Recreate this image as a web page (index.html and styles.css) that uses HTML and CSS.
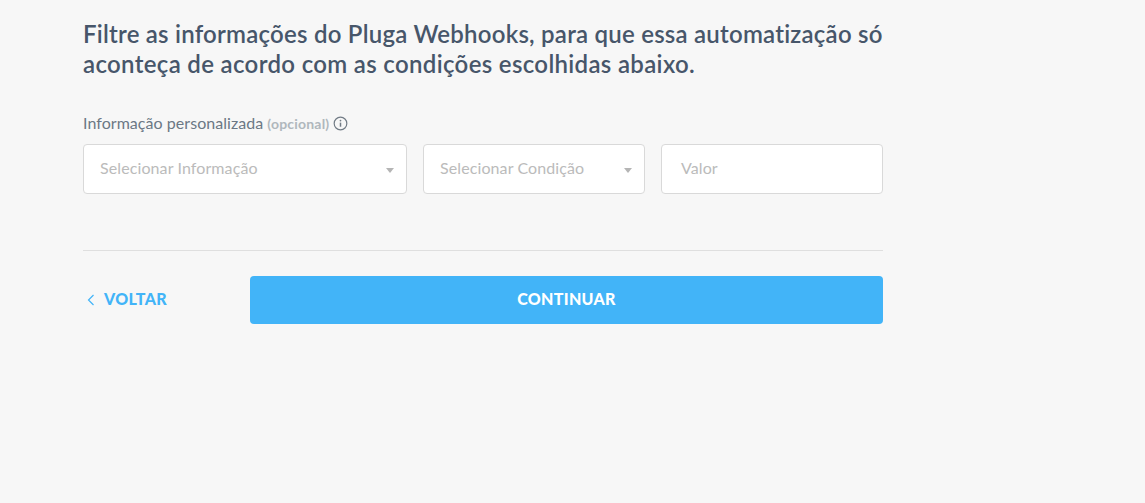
FILE: index.html
```html
<!DOCTYPE html>
<html lang="pt-BR">
<head>
<meta charset="utf-8">
<title>Filtro</title>
<link rel="stylesheet" href="styles.css">
</head>
<body>
<main class="panel">
  <h1 class="title"><span class="line">Filtre as informações do Pluga Webhooks, para que essa automatização só</span> <span class="line line-b">aconteça de acordo com as condições escolhidas abaixo.</span></h1>
  <div class="label">
    <span class="label-text">Informação personalizada</span>
    <span class="optional">(opcional)</span>
    <svg class="info" viewBox="0 0 14 14" width="15" height="15" aria-hidden="true">
      <circle cx="7" cy="7" r="5.9" fill="none" stroke="#717b85" stroke-width="1.1"/>
      <path d="M7 6.2V10" stroke="#717b85" stroke-width="1.4" fill="none"/>
      <circle cx="7" cy="4.3" r="0.8" fill="#717b85"/>
    </svg>
  </div>
  <div class="fields">
    <div class="field select wide">Selecionar Informação<span class="caret"></span></div>
    <div class="field select mid">Selecionar Condição<span class="caret"></span></div>
    <div class="field value">Valor</div>
  </div>
  <hr class="rule">
  <div class="actions">
    <a class="back">
      <svg viewBox="0 0 8 12" width="8" height="12" aria-hidden="true"><path d="M6.5 1 1.5 6l5 5" fill="none" stroke="#42b4f8" stroke-width="1.2"/></svg>
      <span class="back-text">VOLTAR</span>
    </a>
    <button class="continue">CONTINUAR</button>
  </div>
</main>
</body>
</html>
```
FILE: styles.css
```css
* { box-sizing: border-box; }
html, body { margin: 0; height: 100%; }
body {
  background: #f7f7f7;
  font-family: "Lato", "Liberation Sans", sans-serif;
  overflow: hidden;
}
.panel { width: 800px; margin-left: 83px; padding-top: 19px; }
.title {
  margin: 0;
  font-size: 24px;
  line-height: 30px;
  font-weight: 600;
  color: #47566a;
}
.line { display: block; white-space: nowrap; letter-spacing: 0.23px; }
.line-b { letter-spacing: 0.33px; }
.label {
  display: flex;
  align-items: center;
  margin-top: 35px;
  height: 18px;
  font-size: 16px;
  color: #6b7885;
}
.label-text { padding-bottom: 2px; letter-spacing: 0.05px; }
.optional { margin-left: 4px; font-size: 14px; font-weight: 700; letter-spacing: 0.2px; color: #b0b7bd; }
.info { margin: 0 0 0 4px; }
.fields { display: flex; gap: 16px; margin-top: 12px; }
.field {
  height: 50px;
  display: flex;
  align-items: center;
  justify-content: space-between;
  background: #fff;
  border: 1px solid #d9d9d9;
  border-radius: 4px;
  font-size: 16px;
  letter-spacing: 0.1px;
  color: #bbbbbb;
}
.select { padding: 0 12px 3px 16px; }
.caret {
  width: 0; height: 0;
  margin-top: 5px;
  border-left: 4.5px solid transparent;
  border-right: 4.5px solid transparent;
  border-top: 5px solid #b5b5b5;
}
.wide { width: 324px; }
.mid { width: 222px; }
.value { width: 222px; padding: 0 0 4px 19px; }
.rule { height: 1px; border: 0; margin: 56px 0 0; background: #dfdfdf; }
.actions { display: flex; align-items: center; justify-content: space-between; margin-top: 25px; }
.back {
  display: flex;
  align-items: center;
  gap: 9px;
  padding-left: 4px;
  font-size: 16px;
  font-weight: 900;
  letter-spacing: 0.35px;
  color: #42b4f8;
}
.back-text { padding-bottom: 4px; }
.continue {
  width: 633px;
  height: 48px;
  padding: 0 0 4px;
  border: 0;
  border-radius: 4px;
  background: #42b4f8;
  color: #fff;
  font: 900 16px "Lato", "Liberation Sans", sans-serif;
  letter-spacing: 0.3px;
}
```
